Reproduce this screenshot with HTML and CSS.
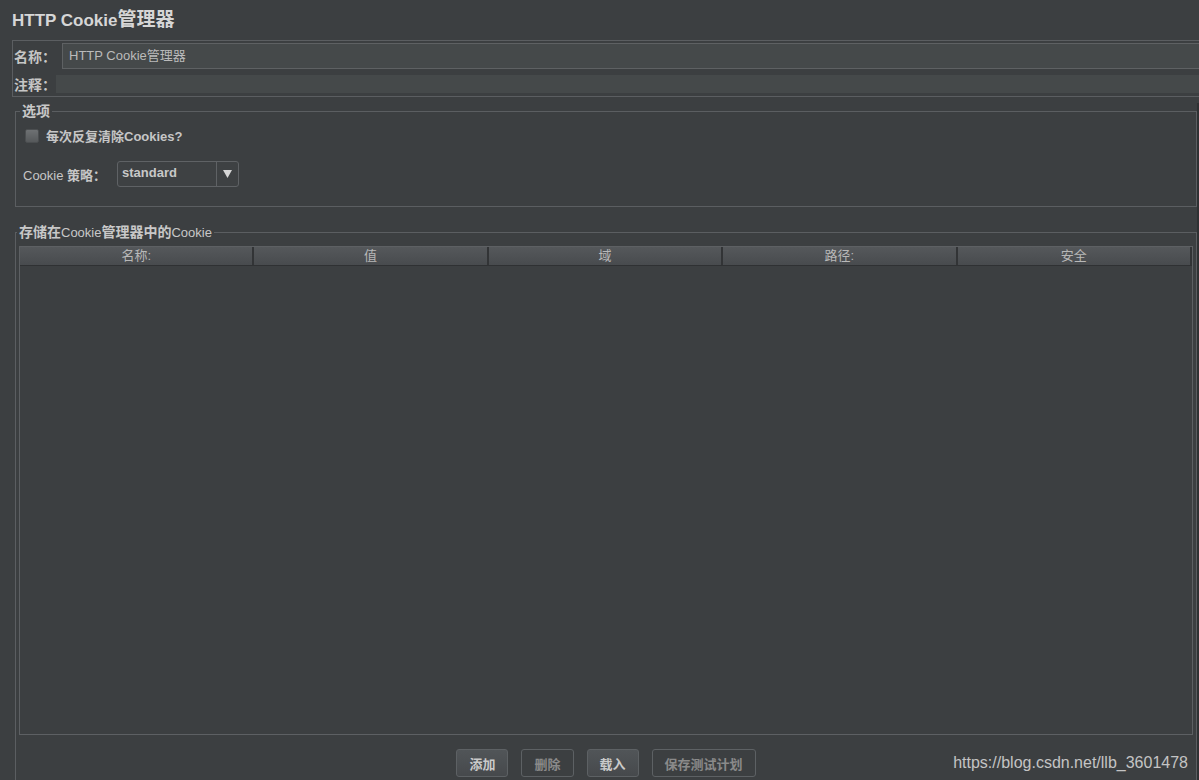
FILE: index.html
```html
<!DOCTYPE html>
<html lang="zh-CN">
<head>
    <meta charset="UTF-8">
    <title>HTTP Cookie管理器</title>
    <link rel="stylesheet" href="styles.css">
</head>
<body>
    <div class="page">
        <div class="title">HTTP Cookie<span class="title-cjk">管理器</span></div>

        <div class="name-panel">
            <div class="name-row">
                <label class="name-label">名称：</label>
                <div class="text-field">HTTP Cookie管理器</div>
            </div>
            <div class="comment-row">
                <label class="comment-label">注释：</label>
                <div class="comment-field"></div>
            </div>
        </div>

        <div class="main">
            <fieldset class="group options">
                <legend>选项</legend>
                <div class="check-row">
                    <span class="checkbox"></span>
                    <span class="check-label">每次反复清除Cookies?</span>
                </div>
                <div class="policy-row">
                    <span class="policy-label">Cookie <b>策略：</b></span>
                    <div class="combo">
                        <span class="combo-value">standard</span>
                        <span class="combo-arrow">
                            <svg width="9" height="8" viewBox="0 0 9 8"><polygon points="0,0 9,0 4.5,8" fill="#d6d6d6"/></svg>
                        </span>
                    </div>
                </div>
            </fieldset>

            <fieldset class="group cookies">
                <legend>存储在<span class="latin">Cookie</span>管理器中的<span class="latin">Cookie</span></legend>
                <div class="table">
                    <div class="table-head">
                        <div class="th">名称:</div>
                        <div class="th">值</div>
                        <div class="th">域</div>
                        <div class="th">路径:</div>
                        <div class="th">安全</div>
                    </div>
                    <div class="table-body"></div>
                </div>
                <div class="buttons">
                    <button class="btn">添加</button>
                    <button class="btn disabled">删除</button>
                    <button class="btn">载入</button>
                    <button class="btn disabled">保存测试计划</button>
                </div>
            </fieldset>
        </div>

        <div class="watermark">https://blog.csdn.net/llb_3601478</div>
    </div>
</body>
</html>
```

FILE: styles.css
```css
:root {
    --bg-color: #3c3f41;
    --field-color: #45494a;
    --line-color: #5b5e61;
    --text-color: #bbbbbb;
}
body {
    margin: 0;
    background-color: var(--bg-color);
    color: var(--text-color);
    font-family: "Liberation Sans", "Noto Sans CJK SC", sans-serif;
    font-size: 13px;
    overflow: hidden;
}
.page {
    position: relative;
    height: 780px;
    overflow: hidden;
}
.title {
    height: 40px;
    line-height: 40px;
    padding-left: 12px;
    font-size: 17px;
    font-weight: bold;
    color: #d6d6d6;
}
.title-cjk {
    font-size: 19px;
}
.name-panel {
    margin-left: 12px;
    border-top: 1px solid var(--line-color);
    border-left: 1px solid var(--line-color);
    border-bottom: 1px solid var(--line-color);
    padding: 2px 0 2px 1px;
}
.name-row, .comment-row {
    display: flex;
    align-items: center;
}
.name-label, .comment-label {
    font-size: 14px;
    font-weight: bold;
    color: #c6c6c6;
}
.name-label {
    width: 48px;
}
.comment-label {
    width: 42px;
}
.text-field {
    flex: 1;
    height: 24px;
    line-height: 24px;
    padding-left: 6px;
    background-color: var(--field-color);
    border: 1px solid #5e6163;
    border-right: none;
}
.comment-row {
    margin-top: 5px;
}
.comment-field {
    flex: 1;
    height: 18px;
    background-color: var(--field-color);
}
.main {
    border-right: 2px solid #2f3133;
    margin-top: 6px;
}
.group {
    margin: 0 0 0 15px;
    border: 1px solid var(--line-color);
    padding: 0;
}
.group legend {
    padding: 0 2px;
    font-size: 14px;
    line-height: 16px;
    font-weight: bold;
    color: #c8c8c8;
}
.options {
    padding: 8px 0 19px 9px;
}
.options legend {
    margin-left: -5px;
}
.check-row {
    display: flex;
    align-items: center;
    height: 17px;
}
.checkbox {
    width: 12px;
    height: 12px;
    border: 1px solid #4b4e50;
    border-radius: 2px;
    background: linear-gradient(#6e7173, #56595b);
    margin-right: 7px;
}
.check-label {
    font-weight: bold;
    color: #c6c6c6;
}
.policy-row {
    display: flex;
    align-items: center;
    margin-top: 17px;
    margin-left: -2px;
}
.policy-label {
    width: 94px;
    color: #c6c6c6;
}
.combo {
    display: flex;
    width: 120px;
    height: 24px;
    border: 1px solid #5f6265;
    border-radius: 3px;
    background-color: #3e4143;
}
.combo-value {
    flex: 1;
    padding-left: 4px;
    line-height: 22px;
    font-weight: bold;
    color: #c8c8c8;
}
.combo-arrow {
    width: 21px;
    display: flex;
    align-items: center;
    justify-content: center;
    border-left: 1px solid #5f6265;
}
.cookies {
    margin-top: 17px;
    padding: 5px 3px 10px 3px;
}
.cookies legend {
    margin-left: -2px;
}
.cookies legend .latin {
    font-size: 13px;
    font-weight: normal;
}
.table {
    height: 487px;
    border: 1px solid #5d6063;
    display: flex;
    flex-direction: column;
}
.table-head {
    display: grid;
    grid-template-columns: repeat(5, 1fr);
    height: 18px;
    background: linear-gradient(#55585b, #484b4e);
    border-bottom: 1px solid #2f3133;
}
.th {
    text-align: center;
    line-height: 18px;
    color: #b8b8b8;
    border-right: 2px solid #323436;
}
.table-body {
    flex: 1;
}
.buttons {
    display: flex;
    justify-content: center;
    gap: 13px;
    margin-top: 14px;
}
.btn {
    height: 28px;
    padding: 0 12px;
    font-family: inherit;
    font-size: 13px;
    font-weight: bold;
    color: #cacaca;
    background: linear-gradient(#515558, #46494c);
    border: 1px solid #5d6164;
    border-radius: 3px;
}
.btn.disabled {
    color: #8a8a8a;
    background: var(--bg-color);
}
.watermark {
    position: absolute;
    right: 11px;
    bottom: 8px;
    font-size: 16px;
    color: #c4c4c4;
}
```
